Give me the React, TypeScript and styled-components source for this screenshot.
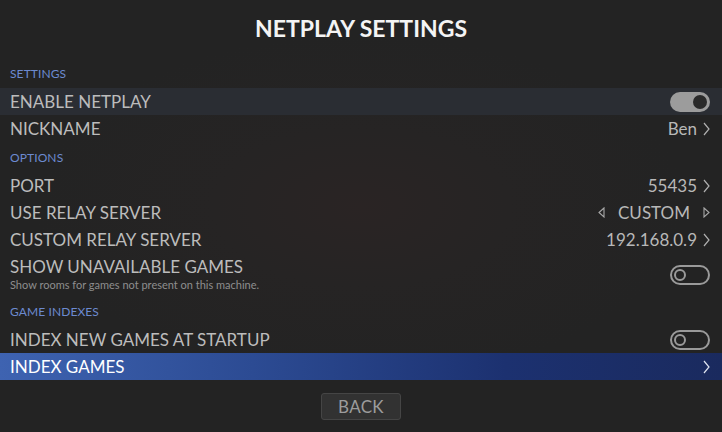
import React from "react";
import styled, { createGlobalStyle } from "styled-components";

const Global = createGlobalStyle`
  html, body { margin: 0; padding: 0; background: #232323; }
  body { font-family: Lato, "Open Sans", sans-serif; }
  #root { width: 722px; height: 432px; overflow: hidden; }
`;

const Screen = styled.div`
  width: 722px;
  height: 432px;
  display: flex;
  flex-direction: column;
  background: radial-gradient(ellipse 45% 40% at 50% 48%, #2a2424 0%, #262424 45%, #232323 100%);
  color: #bdbdbd;
`;

const Title = styled.h1`
  margin: 0;
  height: 58px;
  display: flex;
  align-items: center;
  justify-content: center;
  font-family: Lato, sans-serif;
  font-weight: 700;
  font-size: 23px;
  letter-spacing: 0;
  color: #f4f4f4;
  padding-bottom: 3px;
  box-sizing: border-box;
`;

const List = styled.div`
  display: flex;
  flex-direction: column;
`;

const Header = styled.div`
  height: 30px;
  display: flex;
  align-items: center;
  padding: 0 10px;
  font-size: 12px;
  color: #6c8ad0;
  letter-spacing: 0.1px;
`;

const Row = styled.div<{ $variant?: "hover" | "selected" }>`
  height: 27px;
  display: flex;
  align-items: center;
  justify-content: space-between;
  padding: 0 12px 0 10px;
  font-size: 17px;
  color: ${(p) => (p.$variant === "selected" ? "#ffffff" : "#bcbcbc")};
  background: ${(p) =>
    p.$variant === "hover"
      ? "#2a2d33"
      : p.$variant === "selected"
      ? "linear-gradient(90deg, #3e63b1 0%, #2c4b93 35%, #1c3170 70%, #1a2a5e 100%)"
      : "transparent"};
`;

const TallRow = styled.div`
  height: 43px;
  display: flex;
  align-items: center;
  justify-content: space-between;
  padding: 0 12px 0 10px;
  color: #bcbcbc;
`;

const LabelStack = styled.div`
  display: flex;
  flex-direction: column;
  gap: 1px;
  margin-top: -3px;
`;

const Label = styled.span`
  font-size: 17px;
`;

const Sub = styled.span`
  font-size: 11px;
  color: #8e8e8e;
`;

const Value = styled.div`
  display: flex;
  align-items: center;
  gap: 6px;
  font-size: 17px;
  color: #b8b8b8;
`;

const Toggle = styled.div<{ $on?: boolean }>`
  width: 40px;
  height: 20px;
  box-sizing: border-box;
  border-radius: 10px;
  display: flex;
  align-items: center;
  justify-content: ${(p) => (p.$on ? "flex-end" : "flex-start")};
  padding: 0 3px;
  background: ${(p) => (p.$on ? "#9c9c9c" : "transparent")};
  border: ${(p) => (p.$on ? "none" : "2px solid #9a9a9a")};
`;

const Knob = styled.div<{ $on?: boolean }>`
  width: ${(p) => (p.$on ? 14 : 12)}px;
  height: ${(p) => (p.$on ? 14 : 12)}px;
  border-radius: 50%;
  box-sizing: border-box;
  background: ${(p) => (p.$on ? "#2a2a2a" : "transparent")};
  border: ${(p) => (p.$on ? "none" : "2px solid #9a9a9a")};
  margin-left: ${(p) => (p.$on ? 0 : -1)}px;
`;

const Footer = styled.div`
  flex: 1;
  display: flex;
  justify-content: center;
  align-items: flex-start;
  padding-top: 13px;
`;

const BackButton = styled.button`
  width: 80px;
  height: 27px;
  background: #323232;
  border: 1px solid #454545;
  border-radius: 3px;
  color: #9c9c9c;
  font-family: Lato, sans-serif;
  font-size: 17px;
  padding: 0;
  letter-spacing: 0.3px;
`;

const Chevron = ({ color = "#b0b0b0" }: { color?: string }) => (
  <svg width="7" height="14" viewBox="0 0 7 14">
    <polyline points="1,1 6,7 1,13" fill="none" stroke={color} strokeWidth="1.2" />
  </svg>
);

const Tri = ({ dir }: { dir: "l" | "r" }) => (
  <svg width="7" height="11" viewBox="0 0 7 11">
    {dir === "l" ? (
      <polygon points="6,1 1,5.5 6,10" fill="none" stroke="#a8a8a8" strokeWidth="1.1" />
    ) : (
      <polygon points="1,1 6,5.5 1,10" fill="none" stroke="#a8a8a8" strokeWidth="1.1" />
    )}
  </svg>
);

const Spread = styled.div`
  display: flex;
  align-items: center;
  gap: 13px;
`;

export default function App() {
  return (
    <>
      <Global />
      <Screen>
        <Title>NETPLAY SETTINGS</Title>
        <List>
          <Header>SETTINGS</Header>
          <Row $variant="hover">
            <span>ENABLE NETPLAY</span>
            <Toggle $on>
              <Knob $on />
            </Toggle>
          </Row>
          <Row>
            <span>NICKNAME</span>
            <Value>
              Ben <Chevron />
            </Value>
          </Row>
          <Header>OPTIONS</Header>
          <Row>
            <span>PORT</span>
            <Value>
              55435 <Chevron />
            </Value>
          </Row>
          <Row>
            <span>USE RELAY SERVER</span>
            <Spread>
              <Tri dir="l" />
              <Value>CUSTOM</Value>
              <Tri dir="r" />
            </Spread>
          </Row>
          <Row>
            <span>CUSTOM RELAY SERVER</span>
            <Value>
              192.168.0.9 <Chevron />
            </Value>
          </Row>
          <TallRow>
            <LabelStack>
              <Label>SHOW UNAVAILABLE GAMES</Label>
              <Sub>Show rooms for games not present on this machine.</Sub>
            </LabelStack>
            <Toggle>
              <Knob />
            </Toggle>
          </TallRow>
          <Header>GAME INDEXES</Header>
          <Row>
            <span>INDEX NEW GAMES AT STARTUP</span>
            <Toggle>
              <Knob />
            </Toggle>
          </Row>
          <Row $variant="selected">
            <span>INDEX GAMES</span>
            <Chevron color="#dfe4f0" />
          </Row>
        </List>
        <Footer>
          <BackButton>BACK</BackButton>
        </Footer>
      </Screen>
    </>
  );
}
